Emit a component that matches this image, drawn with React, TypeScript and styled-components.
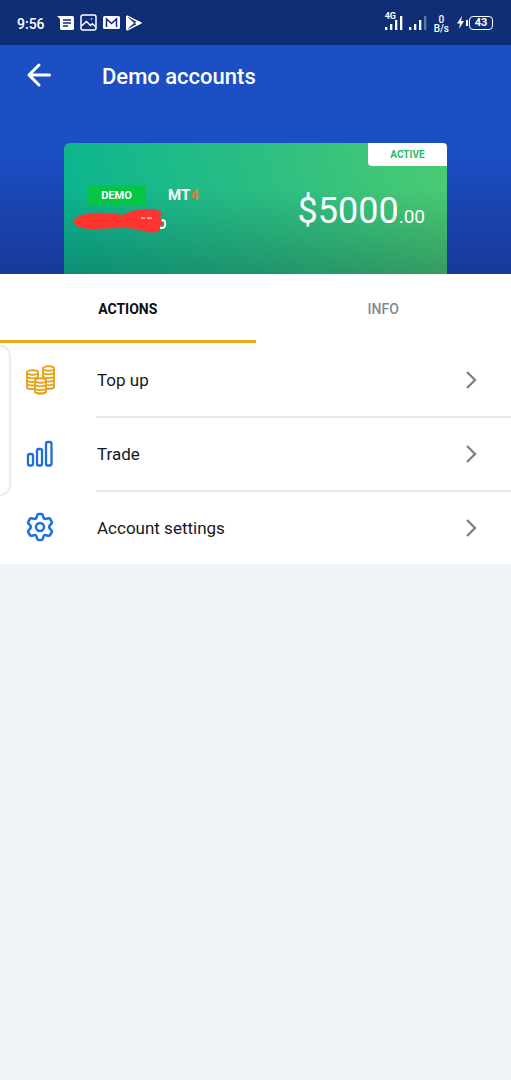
import React, { useState } from "react";
import styled, { createGlobalStyle } from "styled-components";

const GlobalStyle = createGlobalStyle`
  * { box-sizing: border-box; }
  body {
    margin: 0;
    background: #f0f3f8;
    font-family: Roboto, "Liberation Sans", sans-serif;
  }
  button { font-family: inherit; border: 0; padding: 0; background: none; cursor: pointer; }
`;

const Screen = styled.div`
  position: relative;
  min-height: 100vh;
  background: #f0f3f8;
`;

const StatusBar = styled.div`
  display: flex;
  align-items: center;
  justify-content: space-between;
  height: 45px;
  padding: 0 18px 0 17px;
  background: #102e75;
  color: #fff;
  svg { display: block; }
`;

const StatusGroup = styled.div<{ $gap: number }>`
  display: flex;
  align-items: center;
  gap: ${(p) => p.$gap}px;
`;

const Clock = styled.time`
  font-size: 14px;
  font-weight: 500;
  line-height: 20px;
  padding: 2px 6px 0 0;
`;

const Signal = styled.div`
  display: flex;
  flex-direction: column;
`;

const NetworkType = styled.span`
  position: absolute;
  top: 12px;
  font-size: 9px;
  line-height: 8px;
  font-weight: 700;
`;

const Speed = styled.div`
  display: flex;
  flex-direction: column;
  align-items: center;
  padding: 2px 2px 0 1px;
  font-size: 10px;
  line-height: 9px;
  font-weight: 500;
`;

const Battery = styled.div`
  display: flex;
  align-items: center;
  gap: 2px;
`;

const BatteryLevel = styled.span`
  width: 24px;
  height: 14px;
  margin-left: -1px;
  border: 1px solid #fff;
  border-radius: 4px;
  font-size: 11px;
  line-height: 12px;
  font-weight: 700;
  text-align: center;
`;

const Hero = styled.header`
  background: linear-gradient(180deg, #1c4ec4 0%, #1c4ec4 45%, #17399a 100%);
`;

const TitleBar = styled.div`
  display: flex;
  align-items: center;
  height: 62px;
  padding-left: 24px;
`;

const BackButton = styled.button`
  width: 30px;
  height: 30px;
  margin-right: 48px;
  padding-bottom: 2px;
  svg { display: block; }
`;

const Title = styled.h1`
  margin: 0;
  padding-top: 2px;
  color: #fff;
  font-size: 22px;
  line-height: 28px;
  font-weight: 500;
`;

const Card = styled.section`
  position: relative;
  display: flex;
  justify-content: space-between;
  height: 131px;
  margin: 36px 64px 0;
  padding: 42px 22px 0 9px;
  border-radius: 6px 6px 0 0;
  background:
    linear-gradient(180deg, rgba(0, 50, 70, 0) 35%, rgba(20, 70, 60, 0.34) 100%),
    linear-gradient(75deg, #08b491 0%, #29bd84 50%, #4ccb72 100%);
`;

const CardInfo = styled.div`
  display: flex;
  flex-direction: column;
  gap: 3px;
  svg { display: block; }
`;

const Platform = styled.div`
  display: flex;
  align-items: center;
  gap: 22px;
  padding-left: 14px;
  color: #fff;
  font-size: 15px;
  line-height: 21px;
  font-weight: 700;
`;

const DemoBadge = styled.span`
  width: 59px;
  border-radius: 2px;
  background: #05c545;
  font-size: 11px;
  font-weight: 700;
  line-height: 21px;
  text-align: center;
`;

const Version = styled.span`
  color: #e07a38;
`;

const ActiveBadge = styled.span`
  position: absolute;
  top: 0;
  right: 0;
  width: 79px;
  height: 23px;
  border-radius: 0 4px 0 4px;
  background: #fff;
  color: #26bd68;
  font-size: 10px;
  line-height: 24px;
  font-weight: 700;
  text-align: center;
`;

const Balance = styled.div`
  padding-top: 4px;
  color: #fff;
  font-size: 36px;
  line-height: 44px;
  font-weight: 400;
`;

const Cents = styled.span`
  font-size: 19px;
`;

const Tabs = styled.div`
  display: flex;
  background: #fff;
`;

const Tab = styled.button<{ $active: boolean }>`
  flex: 1;
  height: 69px;
  padding-top: 4px;
  border-bottom: 3px solid ${(p) => (p.$active ? "#eaa716" : "transparent")};
  color: ${(p) => (p.$active ? "#0c0d10" : "#81879a")};
  font-size: 14px;
  line-height: 20px;
  font-weight: ${(p) => (p.$active ? 700 : 500)};
`;

const Actions = styled.nav`
  padding-top: 1px;
  background: #fff;
`;

const ActionRow = styled.button`
  display: flex;
  align-items: center;
  width: 100%;
  height: 74px;
  padding-left: 24px;
  color: #17181b;
  text-align: left;
  &:last-child { height: 72px; }
  &:last-child > span { border-bottom: 0; }
  svg { display: block; flex: none; }
`;

const ActionLabel = styled.span`
  display: flex;
  align-items: center;
  justify-content: space-between;
  flex: 1;
  height: 100%;
  margin-left: 40px;
  padding: 0 33px 0 1px;
  border-bottom: 2px solid #e7e7e9;
  font-size: 17px;
  line-height: 24px;
`;

const EdgeHandle = styled.div`
  position: absolute;
  left: -10px;
  top: 345px;
  width: 21px;
  height: 151px;
  border: 2px solid #ebebed;
  border-radius: 14px;
  background: #fff;
`;

const SignalBars = ({ weak = false }: { weak?: boolean }) => (
  <svg width="18" height="15" viewBox="0 0 18 15" fill="#fff" aria-hidden="true">
    <rect x="0" y="12" width="2.300" height="3" />
    <rect x="5" y="9" width="2.300" height="6" />
    <rect x="10" y="5" width="2.300" height="10" />
    <rect x="15" y="1" width="2.300" height="14" opacity={weak ? 0.35 : 1} />
  </svg>
);

const NotificationIcons = () => (
  <>
    <svg width="17" height="16" viewBox="0 0 17 16" aria-hidden="true">
      <path d="M0 1h15.500q1.500 0 1.500 1.500v11q0 1.500-1.500 1.500H4.500Q3 15 3 13.500V4z" fill="#fff" />
      <path d="M6 5h8M6 8h8M6 11h5" stroke="#102e75" strokeWidth="1.300" />
    </svg>
    <svg width="17" height="17" viewBox="0 0 17 17" fill="none" stroke="#fff" strokeWidth="1.500" aria-hidden="true">
      <rect x="1" y="1" width="15" height="15" rx="2" />
      <path d="M1.500 12 6.500 7.500l4 4 1.800-1.800 3.400 3" />
      <circle cx="11.500" cy="5" r="0.800" fill="#fff" stroke="none" />
    </svg>
    <svg width="17" height="15" viewBox="0 0 17 15" aria-hidden="true">
      <rect y="1" width="17" height="13" rx="1.500" fill="#fff" />
      <path d="M3.500 12V4l5 4.500 5-4.500v8" fill="none" stroke="#102e75" strokeWidth="1.500" />
    </svg>
    <svg width="17" height="16" viewBox="0 0 17 16" aria-hidden="true">
      <path d="M0 .5v15L9 8z" fill="#fff" />
      <path d="M1 .8 14.500 8 1 15.200" fill="none" stroke="#fff" strokeWidth="1.500" />
      <path d="M11.500 5.500l4.500 2.500-4.500 2.500L9 8z" fill="#fff" />
      <path d="M2.500 2.500 8.500 8l-6 5.500" fill="none" stroke="#102e75" strokeWidth="0.900" />
    </svg>
  </>
);

const BackArrow = () => (
  <svg width="30" height="28" viewBox="0 0 30 28" fill="none" stroke="#fff" strokeWidth="3" strokeLinecap="round" strokeLinejoin="round" aria-hidden="true">
    <path d="M25.500 14H5.500M15 4 5 14l10 10" />
  </svg>
);

const Scribble = () => (
  <svg width="96" height="26" viewBox="0 0 96 26" aria-hidden="true">
    <path d="M88 13q3-4 4 0 1 6-3 6-3 0-3-3" fill="none" stroke="#fff" strokeWidth="1.800" />
    <path d="M2 10Q6 5 20 4q16-1 29 2Q62 0 74 0q13 0 15 5l-2 3 3 7-3 3v4q-6 3-17 0-9-3-20-3l-28 1Q4 20 1 14-1 11 2 10z" fill="#fd3430" />
    <path d="M68 9h4M74 9h5" stroke="#fff" strokeWidth="1" />
  </svg>
);

const DISC = 3.6;

const Stack = ({ x, y, count }: { x: number; y: number; count: number }) => (
  <g transform={`translate(${x} ${y})`}>
    <path d={`M0 2.500v${count * DISC}c0 3 11 3 11 0v-${count * DISC}z`} fill="#fff" />
    <ellipse cx="5.500" cy="2.500" rx="5.500" ry="2.200" fill="#fff" />
    {Array.from({ length: count }, (_, i) => (
      <path key={i} d={`M0 ${2.5 + (i + 1) * DISC}c0 3 11 3 11 0`} />
    ))}
  </g>
);

const CoinsIcon = () => (
  <svg width="32" height="32" viewBox="0 0 32 32" fill="none" stroke="#e6a41c" strokeWidth="1.900" aria-hidden="true">
    <Stack x={19} y={1} count={5} />
    <Stack x={3} y={5} count={4} />
    <Stack x={11} y={13} count={3} />
  </svg>
);

const ChartIcon = () => (
  <svg width="32" height="32" viewBox="0 0 32 32" fill="none" stroke="#1d6fdd" strokeWidth="2.300" aria-hidden="true">
    <rect x="4" y="15" width="5" height="11.500" rx="1.800" />
    <rect x="13" y="10" width="5" height="16.500" rx="1.800" />
    <rect x="22" y="3" width="5.500" height="23.500" rx="1.800" />
  </svg>
);

const GearIcon = () => (
  <svg width="32" height="32" viewBox="0 0 32 32" fill="none" stroke="#1d6fdd" strokeWidth="2.500" strokeLinejoin="round" aria-hidden="true">
    <path d="M14.500 2h3q1 0 1.300 1.200l.7 2.600q.4 1 1.500 1.200l3.300-.7q1.200-.3 1.800.7l1.700 2.800q.5 1-.3 1.800l-1.900 2q-1 1.400 0 2.800l1.900 2q.8.800.3 1.800l-1.700 2.800q-.6 1-1.800.7l-3.300-.7q-1.100.2-1.500 1.200l-.7 2.600q-.3 1.200-1.300 1.200h-3q-1 0-1.300-1.200l-.7-2.600q-.4-1-1.500-1.200l-3.300.7q-1.200.3-1.800-.7l-1.700-2.800q-.5-1 .3-1.800l1.900-2q1-1.400 0-2.800l-1.900-2q-.8-.8-.3-1.800l1.700-2.800q.6-1 1.800-.7l3.300.7q1.100-.2 1.500-1.200l.7-2.600q.3-1.200 1.300-1.200z" />
    <circle cx="16" cy="15" r="4" />
  </svg>
);

const Chevron = () => (
  <svg width="14" height="20" viewBox="0 0 14 20" fill="none" stroke="#7f828a" strokeWidth="2.400" aria-hidden="true">
    <path d="M3 2l8 8-8 8" />
  </svg>
);

const actions = [
  { label: "Top up", icon: <CoinsIcon /> },
  { label: "Trade", icon: <ChartIcon /> },
  { label: "Account settings", icon: <GearIcon /> },
];

export default function App() {
  const [tab, setTab] = useState("ACTIONS");
  return (
    <Screen>
      <GlobalStyle />
      <StatusBar>
        <StatusGroup $gap={6}>
          <Clock>9:56</Clock>
          <NotificationIcons />
        </StatusGroup>
        <StatusGroup $gap={6}>
          <Signal>
            <NetworkType>4G</NetworkType>
            <SignalBars />
          </Signal>
          <SignalBars weak />
          <Speed>
            <span>0</span>
            <span>B/s</span>
          </Speed>
          <Battery>
            <svg width="7" height="13" viewBox="0 0 7 13" fill="#fff" aria-hidden="true">
              <path d="M5 0 0 7.500h3L2 13l5-8H4z" />
            </svg>
            <svg width="2" height="6" viewBox="0 0 2 6" fill="#fff" aria-hidden="true">
              <rect width="2" height="6" />
            </svg>
            <BatteryLevel>43</BatteryLevel>
          </Battery>
        </StatusGroup>
      </StatusBar>
      <Hero>
        <TitleBar>
          <BackButton type="button" aria-label="Back">
            <BackArrow />
          </BackButton>
          <Title>Demo accounts</Title>
        </TitleBar>
        <Card>
          <CardInfo>
            <Platform>
              <DemoBadge>DEMO</DemoBadge>
              <span>
                MT<Version>4</Version>
              </span>
            </Platform>
            <Scribble />
          </CardInfo>
          <ActiveBadge>ACTIVE</ActiveBadge>
          <Balance>
            $5000<Cents>.00</Cents>
          </Balance>
        </Card>
      </Hero>
      <Tabs role="tablist">
        {["ACTIONS", "INFO"].map((name) => (
          <Tab
            key={name}
            type="button"
            role="tab"
            aria-selected={tab === name}
            $active={tab === name}
            onClick={() => setTab(name)}
          >
            {name}
          </Tab>
        ))}
      </Tabs>
      <Actions>
        {actions.map(({ label, icon }) => (
          <ActionRow key={label} type="button">
            {icon}
            <ActionLabel>
              {label}
              <Chevron />
            </ActionLabel>
          </ActionRow>
        ))}
      </Actions>
      <EdgeHandle />
    </Screen>
  );
}
